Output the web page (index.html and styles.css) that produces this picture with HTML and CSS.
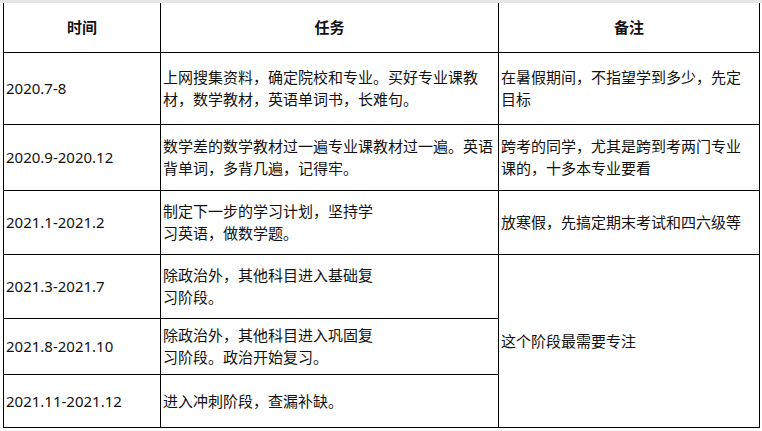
FILE: index.html
```html
<!DOCTYPE html>
<html lang="zh-CN">
<head>
<meta charset="utf-8">
<title>考研时间规划</title>
<link rel="stylesheet" href="styles.css">
</head>
<body>
<div class="page">
  <div class="topbar"></div>
  <table class="plan">
    <colgroup>
      <col class="c1">
      <col class="c2">
      <col class="c3">
    </colgroup>
    <thead>
      <tr class="h-head">
        <th>时间</th>
        <th>任务</th>
        <th>备注</th>
      </tr>
    </thead>
    <tbody>
      <tr class="h1">
        <td class="date">2020.7-8</td>
        <td>上网搜集资料，确定院校和专业。买好专业课教<br>材，数学教材，英语单词书，长难句。</td>
        <td>在暑假期间，不指望学到多少，先定<br>目标</td>
      </tr>
      <tr class="h2">
        <td class="date">2020.9-2020.12</td>
        <td>数学差的数学教材过一遍专业课教材过一遍。英语<br>背单词，多背几遍，记得牢。</td>
        <td>跨考的同学，尤其是跨到考两门专业<br>课的，十多本专业要看</td>
      </tr>
      <tr class="h3">
        <td class="date">2021.1-2021.2</td>
        <td>制定下一步的学习计划，坚持学<br>习英语，做数学题。</td>
        <td>放寒假，先搞定期末考试和四六级等</td>
      </tr>
      <tr class="h4">
        <td class="date">2021.3-2021.7</td>
        <td>除政治外，其他科目进入基础复<br>习阶段。</td>
        <td rowspan="3">这个阶段最需要专注</td>
      </tr>
      <tr class="h5">
        <td class="date">2021.8-2021.10</td>
        <td>除政治外，其他科目进入巩固复<br>习阶段。政治开始复习。</td>
      </tr>
      <tr class="h6">
        <td class="date">2021.11-2021.12</td>
        <td>进入冲刺阶段，查漏补缺。</td>
      </tr>
    </tbody>
  </table>
</div>
</body>
</html>
```

FILE: styles.css
```css
html, body {
  margin: 0;
  padding: 0;
  background: #ffffff;
}

.page {
  width: 762px;
  height: 431px;
  overflow: hidden;
  font-family: "Noto Sans CJK SC", "Noto Sans", sans-serif;
  color: #111111;
}

.topbar {
  height: 3px;
  background: #e6e6e6;
}

.plan {
  margin-left: 3px;
  border-collapse: collapse;
  table-layout: fixed;
  width: 756px;
  font-size: 15px;
  line-height: 22px;
}

.c1 { width: 157px; }
.c2 { width: 338px; }
.c3 { width: 261px; }

.plan th,
.plan td {
  border: 1px solid #000;
  padding: 0 0 0 2px;
  vertical-align: middle;
  text-align: left;
  white-space: nowrap;
  overflow: hidden;
}

.plan td.date {
  font-family: "Noto Sans", "Noto Sans CJK SC", sans-serif;
}

.plan thead th {
  border-top: none;
  text-align: center;
  font-weight: bold;
  font-size: 15px;
  padding: 0;
}

.h-head { height: 49px; }
.h1 { height: 72px; }
.h2 { height: 66px; }
.h3 { height: 64px; }
.h4 { height: 64px; }
.h5 { height: 56px; }
.h6 { height: 53px; }
```
